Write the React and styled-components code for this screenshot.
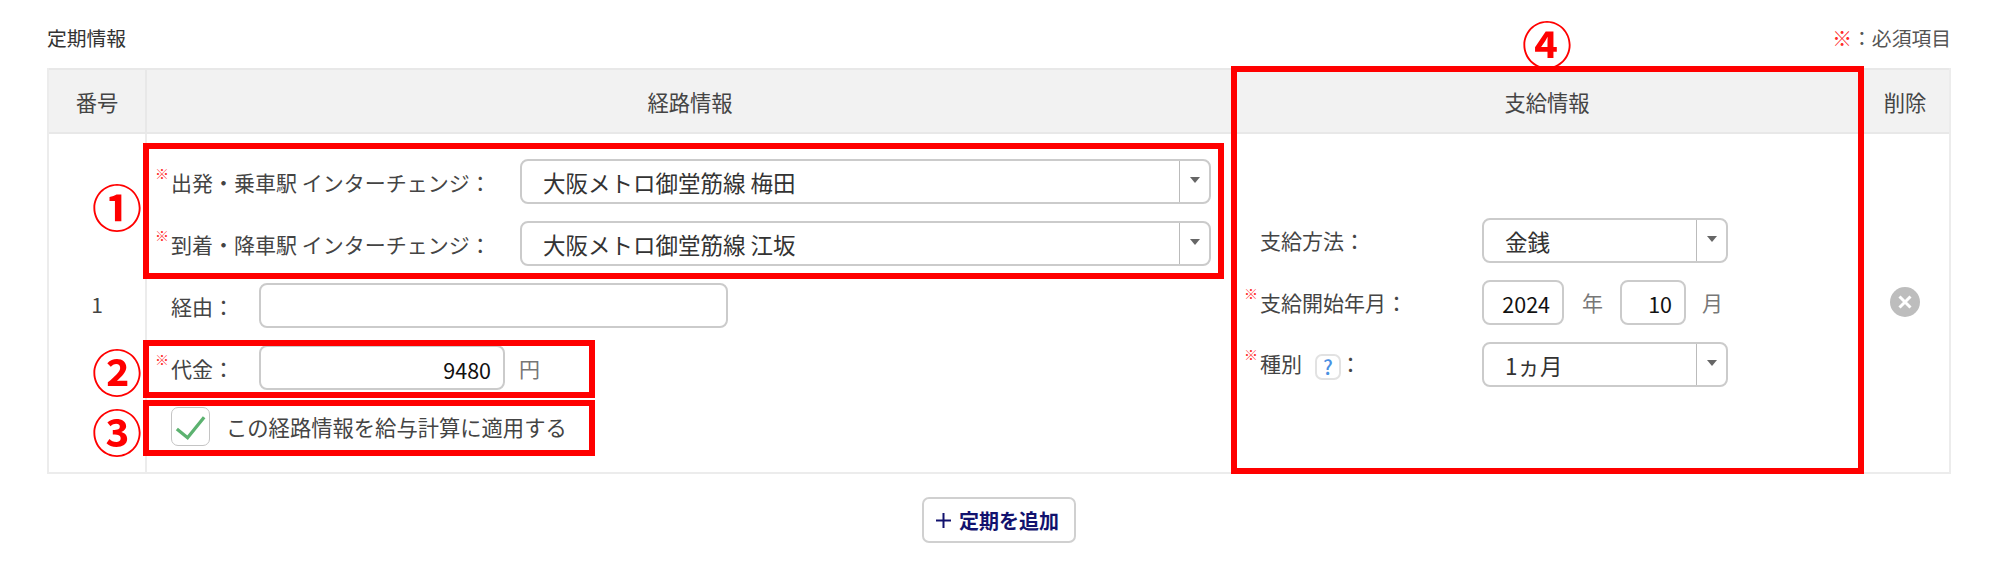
import React from "react";
import styled, { createGlobalStyle } from "styled-components";

const GlobalStyle = createGlobalStyle`
  html, body {
    margin: 0;
    padding: 0;
    background: #fff;
  }
  body {
    font-family: "Noto Sans CJK JP", "Noto Sans", sans-serif;
    color: #444;
  }
`;

const Tick = () => (
  <svg width="38" height="37" viewBox="0 0 38 37">
    <path d="M5 21 L16 30 L33 9" fill="none" stroke="#5cb270" strokeWidth="3.4" />
  </svg>
);

const Caret = () => (
  <svg width="10" height="6" viewBox="0 0 10 6">
    <path d="M0 0 H10 L5 6 Z" fill="#666" />
  </svg>
);

const DeleteIcon = () => (
  <svg width="30" height="30" viewBox="0 0 30 30">
    <circle cx="15" cy="15" r="15" fill="#bdbdbd" />
    <path d="M9.5 9.5 L20.5 20.5 M20.5 9.5 L9.5 20.5" stroke="#fff" strokeWidth="3" />
  </svg>
);

const PlusIcon = () => (
  <svg width="15" height="15" viewBox="0 0 15 15">
    <path d="M0 7.5 H15 M7.5 0 V15" stroke="#12126e" strokeWidth="2" />
  </svg>
);

const Select = ({ value, width, arrow = 30 }) => (
  <SelectBox $width={width}>
    <SelectValue>{value}</SelectValue>
    <SelectArrow $width={arrow}>
      <Caret />
    </SelectArrow>
  </SelectBox>
);

const App = () => {
  return (
    <Page>
      <GlobalStyle />
      <Heading>
        <Title>定期情報</Title>
        <Note>
          <Red>※</Red>：必須項目
        </Note>
      </Heading>

      <Table>
        <HeadCell>番号</HeadCell>
        <HeadCell>経路情報</HeadCell>
        <HeadCell>支給情報</HeadCell>
        <HeadCell $last>削除</HeadCell>

        <NumberCell>1</NumberCell>

        <RouteCell>
          <Row>
            <Label $width={349} $required>
              出発・乗車駅 インターチェンジ：
            </Label>
            <Select value="大阪メトロ御堂筋線 梅田" width={691} />
          </Row>
          <Row>
            <Label $width={349} $required>
              到着・降車駅 インターチェンジ：
            </Label>
            <Select value="大阪メトロ御堂筋線 江坂" width={691} />
          </Row>
          <Row>
            <Label $width={88}>経由：</Label>
            <TextInput $width={469} readOnly value="" />
          </Row>
          <Row>
            <Label $width={88} $required>
              代金：
            </Label>
            <TextInput $width={246} $align="right" readOnly value="9480" />
            <Unit $left={14}>円</Unit>
          </Row>
          <CheckRow>
            <CheckBox>
              <Tick />
            </CheckBox>
            <CheckLabel>この経路情報を給与計算に適用する</CheckLabel>
          </CheckRow>
        </RouteCell>

        <PayCell>
          <Row>
            <Label $width={222}>支給方法：</Label>
            <Select value="金銭" width={246} />
          </Row>
          <Row>
            <Label $width={222} $required>
              支給開始年月：
            </Label>
            <TextInput $width={82} $align="right" readOnly value="2024" />
            <Unit $left={18}>年</Unit>
            <TextInput $width={66} $align="right" $gap={17} readOnly value="10" />
            <Unit $left={16}>月</Unit>
          </Row>
          <Row>
            <Label $width={222} $required>
              種別
              <HelpBadge>?</HelpBadge>：
            </Label>
            <Select value="1ヵ月" width={246} />
          </Row>
        </PayCell>

        <DeleteCell>
          <DeleteIcon />
        </DeleteCell>
      </Table>

      <Footer>
        <AddButton>
          <PlusIcon />
          定期を追加
        </AddButton>
      </Footer>

      <Frame $left={143} $top={143} $width={1081} $height={136} />
      <Frame $left={143} $top={340} $width={452} $height={58} />
      <Frame $left={143} $top={400} $width={452} $height={56} />
      <Frame $left={1231} $top={66} $width={633} $height={408} />

      <Marker $left={92} $top={172}>①</Marker>
      <Marker $left={92} $top={337}>②</Marker>
      <Marker $left={92} $top={397}>③</Marker>
      <Marker $left={1522} $top={9}>④</Marker>
    </Page>
  );
};

export default App;

const Page = styled.div`
  position: relative;
  width: 2000px;
  height: 575px;
  overflow: hidden;
  box-sizing: border-box;
  padding: 0 49px 0 47px;
`;

const Heading = styled.div`
  display: flex;
  justify-content: space-between;
  align-items: center;
  height: 68px;
  padding-top: 7px;
  box-sizing: border-box;
`;

const Title = styled.div`
  font-size: 19.8px;
  color: #333;
`;

const Note = styled.div`
  font-size: 19.8px;
  color: #555;
`;

const Red = styled.span`
  color: #ff2a2a;
`;

const Table = styled.div`
  display: grid;
  grid-template-columns: 98px 1088px 626px 88px;
  grid-template-rows: 66px 339px;
  border-left: 2px solid #ececec;
  border-right: 2px solid #ececec;
  border-bottom: 2px solid #ececec;
  box-sizing: border-box;
  width: 1904px;
  height: 406px;
`;

const HeadCell = styled.div`
  display: flex;
  align-items: center;
  justify-content: center;
  background: #f2f2f2;
  border-top: 2px solid #e8e8e8;
  border-bottom: 2px solid #e8e8e8;
  border-right: ${(p) => (p.$last ? "none" : "2px solid #e8e8e8")};
  box-sizing: border-box;
  font-size: 21.3px;
  color: #444;
`;

const NumberCell = styled.div`
  display: flex;
  align-items: center;
  justify-content: center;
  border-right: 2px solid #ececec;
  font-size: 21px;
  color: #444;
`;

const RouteCell = styled.div`
  display: flex;
  flex-direction: column;
  gap: 17px;
  padding: 25px 0 0 24px;
  border-right: 2px solid #ececec;
`;

const PayCell = styled.div`
  display: flex;
  flex-direction: column;
  justify-content: center;
  gap: 17px;
  padding: 0 0 3px 25px;
  border-right: 2px solid #ececec;
`;

const DeleteCell = styled.div`
  display: flex;
  justify-content: center;
  padding-top: 153px;
`;

const Row = styled.div`
  display: flex;
  align-items: center;
  height: 45px;
`;

const CheckRow = styled.div`
  display: flex;
  align-items: center;
  gap: 16px;
  height: 39px;
`;

const Label = styled.div`
  position: relative;
  flex: none;
  width: ${(p) => p.$width}px;
  font-size: 21px;
  color: #444;
  white-space: nowrap;
  &::before {
    content: "${(p) => (p.$required ? "※" : "")}";
    position: absolute;
    left: -16px;
    top: -4px;
    font-size: 14px;
    color: #ff2a2a;
  }
`;

const SelectBox = styled.div`
  display: flex;
  align-items: stretch;
  width: ${(p) => p.$width}px;
  height: 45px;
  box-sizing: border-box;
  border: 2px solid #cbcbcb;
  border-radius: 8px;
  background: #fff;
`;

const SelectValue = styled.div`
  flex: 1;
  display: flex;
  align-items: center;
  padding: 1px 0 0 21px;
  font-size: 22.5px;
  color: #333;
`;

const SelectArrow = styled.div`
  flex: none;
  width: ${(p) => p.$width}px;
  display: flex;
  align-items: center;
  justify-content: center;
  padding-bottom: 3px;
  box-sizing: border-box;
  border-left: 1px solid #bbb;
`;

const TextInput = styled.input`
  flex: none;
  width: ${(p) => p.$width}px;
  height: 45px;
  margin: 0 0 0 ${(p) => p.$gap || 0}px;
  padding: 3px 12px 0;
  box-sizing: border-box;
  border: 2px solid #cbcbcb;
  border-radius: 8px;
  outline: none;
  background: #fff;
  text-align: ${(p) => p.$align || "left"};
  font-family: "Noto Sans CJK JP", sans-serif;
  font-size: 21.5px;
  color: #111;
`;

const Unit = styled.span`
  margin-left: ${(p) => p.$left}px;
  font-size: 21px;
  color: #777;
`;

const CheckBox = styled.div`
  flex: none;
  display: flex;
  align-items: center;
  justify-content: center;
  width: 39px;
  height: 39px;
  box-sizing: border-box;
  border: 1px solid #c4c4c4;
  border-radius: 7px;
`;

const CheckLabel = styled.span`
  font-size: 21.3px;
  color: #444;
`;

const HelpBadge = styled.span`
  display: inline-flex;
  align-items: center;
  justify-content: center;
  width: 26px;
  height: 26px;
  margin: 0 -1px 0 13px;
  box-sizing: border-box;
  border: 2px solid #e2e2e2;
  border-radius: 7px;
  vertical-align: -3px;
  font-size: 20px;
  font-weight: 500;
  color: #4a90e2;
`;

const Footer = styled.div`
  display: flex;
  justify-content: center;
  padding-top: 23px;
`;

const AddButton = styled.button`
  display: flex;
  align-items: center;
  justify-content: center;
  gap: 8px;
  width: 154px;
  height: 46px;
  margin-left: -1px;
  padding: 0 2px 0 0;
  background: #fff;
  border: 2px solid #d0d0d0;
  border-radius: 7px;
  font-family: "Noto Sans CJK JP", sans-serif;
  font-size: 20px;
  font-weight: 700;
  color: #12126e;
`;

const Frame = styled.div`
  position: absolute;
  left: ${(p) => p.$left}px;
  top: ${(p) => p.$top}px;
  width: ${(p) => p.$width}px;
  height: ${(p) => p.$height}px;
  box-sizing: border-box;
  border: 6px solid #ff0000;
  pointer-events: none;
`;

const Marker = styled.div`
  position: absolute;
  left: ${(p) => p.$left}px;
  top: ${(p) => p.$top}px;
  font-size: 50px;
  line-height: 66px;
  font-weight: 700;
  color: #ff0000;
`;
